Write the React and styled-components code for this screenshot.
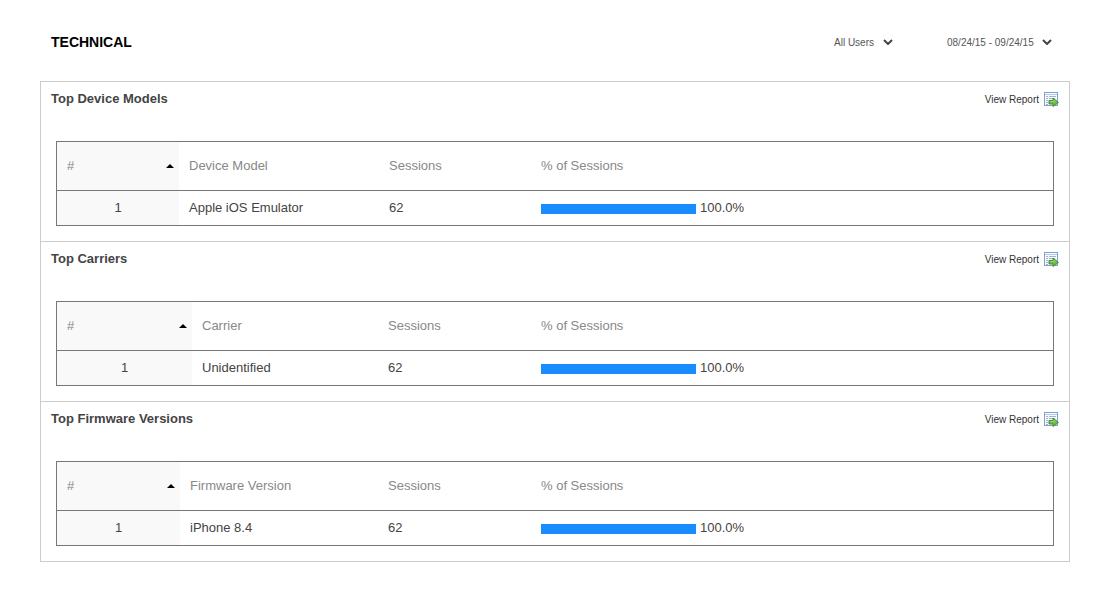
import React, { useState } from "react";
import styled, { createGlobalStyle } from "styled-components";

const GlobalStyle = createGlobalStyle`
  * {
    box-sizing: border-box;
  }

  body {
    margin: 0;
    background-color: #fff;
    color: #444;
    font-family: "Liberation Sans", Arial, Helvetica, sans-serif;
    font-size: 13px;
  }
`;

const reports = [
  {
    id: "devices",
    title: "Top Device Models",
    column: "Device Model",
    widths: [122, 200, 152],
    rows: [{ name: "Apple iOS Emulator", sessions: 62, percent: 100 }],
  },
  {
    id: "carriers",
    title: "Top Carriers",
    column: "Carrier",
    widths: [135, 186, 153],
    rows: [{ name: "Unidentified", sessions: 62, percent: 100 }],
  },
  {
    id: "firmware",
    title: "Top Firmware Versions",
    column: "Firmware Version",
    widths: [123, 198, 153],
    rows: [{ name: "iPhone 8.4", sessions: 62, percent: 100 }],
  },
];

const Chevron = () => (
  <svg width="10" height="6" viewBox="0 0 10 6" aria-hidden="true">
    <path d="M1 1 L5 5 L9 1" fill="none" stroke="#444" strokeWidth="2" />
  </svg>
);

const ReportIcon = () => (
  <svg width="16" height="16" viewBox="0 0 16 16" aria-hidden="true">
    <rect x="1.5" y="1.5" width="13" height="13" fill="#f6fafe" stroke="#7fa3d1" />
    <path d="M2 3.5h12" stroke="#b4cdec" />
    <path
      d="M3 5.5h2M6 5.5h7M3 7.5h2M6 7.5h6M3 9.5h2M3 11.5h2M3 13.5h2"
      stroke="#9fb8c4"
    />
    <path
      d="M6 9.5h4v-2.5l5.500 4.500l-5.500 4v-2.500h-4z"
      fill="#72b84c"
      stroke="#4a8a3a"
      strokeLinejoin="round"
    />
    <path d="M7 10.5h4v-1.200l1.500 1.200" fill="none" stroke="#9fd47e" />
  </svg>
);

const Report = ({ report }) => {
  const [first, second, third] = report.widths;

  return (
    <Section>
      <SectionHeader>
        <SectionTitle>{report.title}</SectionTitle>
        <ReportLink href={`#${report.id}`}>
          View Report
          <ReportIcon />
        </ReportLink>
      </SectionHeader>
      <ReportTable>
        <colgroup>
          <Col $width={first} />
          <Col $width={second} />
          <Col $width={third} />
          <col />
        </colgroup>
        <thead>
          <tr>
            <th aria-sort="ascending">
              <SortLabel>
                #
                <SortArrow width="8" height="4" viewBox="0 0 8 4" aria-hidden="true">
                  <path d="M0 4 L4 0 L8 4 Z" />
                </SortArrow>
              </SortLabel>
            </th>
            <th>{report.column}</th>
            <th>Sessions</th>
            <th>% of Sessions</th>
          </tr>
        </thead>
        <tbody>
          {report.rows.map((row, index) => (
            <tr key={row.name}>
              <td>{index + 1}</td>
              <td>{row.name}</td>
              <td>{row.sessions}</td>
              <td>
                <Share>
                  <Track>
                    <Bar style={{ width: `${row.percent}%` }} />
                  </Track>
                  {row.percent.toFixed(1)}%
                </Share>
              </td>
            </tr>
          ))}
        </tbody>
      </ReportTable>
    </Section>
  );
};

const App = () => {
  const [users, setUsers] = useState("all");
  const [range, setRange] = useState("month");

  return (
    <Page>
      <GlobalStyle />
      <Header>
        <Title>TECHNICAL</Title>
        <Filters>
          <Filter>
            <select
              aria-label="Users"
              value={users}
              onChange={(e) => setUsers(e.target.value)}
            >
              <option value="all">All Users</option>
            </select>
            <Chevron />
          </Filter>
          <Filter>
            <select
              aria-label="Date range"
              value={range}
              onChange={(e) => setRange(e.target.value)}
            >
              <option value="month">08/24/15 - 09/24/15</option>
            </select>
            <Chevron />
          </Filter>
        </Filters>
      </Header>
      <Panel>
        {reports.map((report) => (
          <Report key={report.id} report={report} />
        ))}
      </Panel>
    </Page>
  );
};

const Page = styled.main`
  padding: 32px 40px 40px;
`;

const Header = styled.header`
  display: flex;
  justify-content: space-between;
  align-items: center;
  height: 20px;
  margin-bottom: 29px;
  padding: 0 18px 0 11px;
`;

const Title = styled.h1`
  margin: 0;
  color: #000;
  font-size: 14px;
  font-weight: bold;
`;

const Filters = styled.div`
  display: flex;
  gap: 54px;
`;

const Filter = styled.div`
  position: relative;
  display: flex;
  align-items: center;

  select {
    appearance: none;
    margin: 0;
    padding: 2px 18px 0 0;
    border: none;
    background: transparent;
    color: #555;
    font-family: inherit;
    font-size: 10px;
    line-height: 20px;
    cursor: pointer;
  }

  svg {
    position: absolute;
    right: 0;
    pointer-events: none;
  }
`;

const Panel = styled.div`
  border: 1px solid #ccc;
  border-bottom: none;
`;

const Section = styled.section`
  padding: 7px 15px 15px;
  border-bottom: 1px solid #ccc;
`;

const SectionHeader = styled.div`
  display: flex;
  justify-content: space-between;
  align-items: flex-start;
  height: 20px;
  margin: 0 -5px 32px;
`;

const SectionTitle = styled.h2`
  margin: 0;
  color: #444;
  font-size: 13px;
  font-weight: bold;
  line-height: 20px;
`;

const ReportLink = styled.a`
  display: flex;
  align-items: center;
  gap: 4px;
  height: 20px;
  color: #333;
  font-size: 10px;
  text-decoration: none;
`;

const ReportTable = styled.table`
  width: 100%;
  table-layout: fixed;
  border-collapse: separate;
  border-spacing: 0;
  border: 1px solid #777;
  line-height: 16px;

  th,
  td {
    padding: 0 10px;
    text-align: left;
    font-weight: normal;
  }

  th {
    height: 49px;
    border-bottom: 1px solid #777;
    color: #888;
  }

  td {
    height: 34px;
    color: #444;
  }

  th:first-child,
  td:first-child {
    background-color: #f9f9f9;
  }

  th:first-child {
    padding-right: 5px;
  }

  td:first-child {
    text-align: center;
  }
`;

const Col = styled.col`
  width: ${(props) => props.$width}px;
`;

const SortLabel = styled.div`
  display: flex;
  justify-content: space-between;
  align-items: center;
`;

const SortArrow = styled.svg`
  fill: #000;
`;

const Share = styled.div`
  display: flex;
  align-items: center;
  gap: 4px;
`;

const Track = styled.div`
  width: 155px;
  height: 10px;
  margin-top: 2px;
`;

const Bar = styled.div`
  height: 100%;
  background-color: #1a8cff;
`;

export default App;
